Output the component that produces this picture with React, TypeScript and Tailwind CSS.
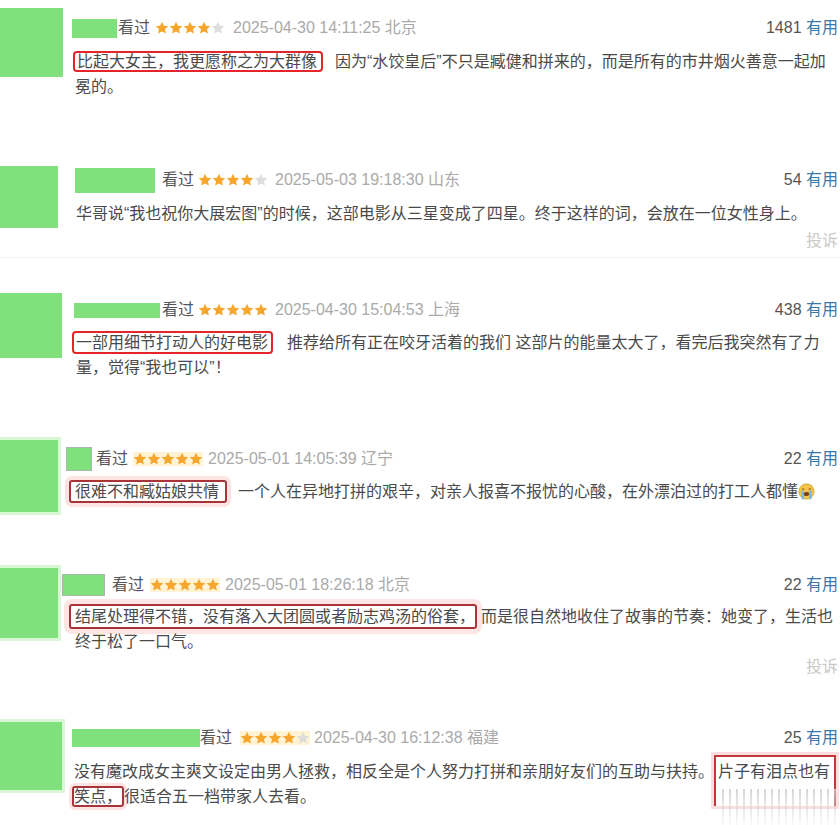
import React from "react";

function Stars({ n, bg }: { n: number; bg?: boolean }) {
  return (
    <span className={bg ? "flex bg-[#fff3d4]" : "flex"}>
      {[0, 1, 2, 3, 4].map((i) => (
        <svg key={i} width="14" height="14" viewBox="0 0 24 24">
          <path
            d="M12 1.2l3.2 7 7.6.8-5.7 5.1 1.6 7.5L12 17.8l-6.7 3.8 1.6-7.5L1.2 9l7.6-.8z"
            fill={i < n ? "#f6a62c" : "#dddddd"}
          />
        </svg>
      ))}
    </span>
  );
}

type HeaderProps = {
  nameCls: string;
  starsCls: string;
  dateCls: string;
  stars: number;
  date: string;
  count: string;
  starBg?: boolean;
};

function Header({ nameCls, starsCls, dateCls, stars, date, count, starBg }: HeaderProps) {
  return (
    <div className="flex h-[26px] items-center whitespace-nowrap">
      <span className={nameCls} />
      <span className="text-[#555]">看过</span>
      <span className={starsCls}>
        <Stars n={stars} bg={starBg} />
      </span>
      <span className={dateCls}>{date}</span>
      <span className="ml-auto text-[#555]">
        {count} <span className="text-[#3a78aa]">有用</span>
      </span>
    </div>
  );
}

function Report() {
  return <div className="text-right leading-[25px] text-[#c8c8c8]">投诉</div>;
}

function CryFace() {
  return (
    <svg width="17" height="17" viewBox="0 0 20 20" className="inline-block align-[-3px]">
      <circle cx="10" cy="10" r="9" fill="#f4c548" stroke="#c99a2a" strokeWidth="0.8" />
      <path d="M4.5 7.5q1.5-1.5 3 0M12.5 7.5q1.5-1.5 3 0" stroke="#6b4a1a" strokeWidth="1.1" fill="none" />
      <ellipse cx="10" cy="13" rx="3.2" ry="2.4" fill="#7a3b1a" />
      <path d="M4 9v10h3V9zM13 9v10h3V9z" fill="#6fb6ea" opacity="0.9" />
    </svg>
  );
}

export default function App() {
  return (
    <div className="w-[840px] h-[825px] overflow-hidden bg-white font-['Liberation_Sans','Noto_Sans_CJK_SC',sans-serif] text-[16px] text-[#4a4a4a]">
      {/* 1 */}
      <div className="flex h-[150px]">
        <div className="mt-[8px] h-[69px] w-[63px] shrink-0 bg-[#7fe07c]" />
        <div className="ml-[9px] min-w-0 flex-1 pr-[2px] pt-[15px]">
          <Header
            nameCls="mr-[1px] h-[19px] w-[45px] bg-[#7fe07c]"
            starsCls="ml-[5px]"
            dateCls="ml-[8px] text-[#aaa]"
            stars={4}
            date="2025-04-30 14:11:25 北京"
            count="1481"
          />
          <div className="mt-[8px] pl-[1px] leading-[25px] whitespace-nowrap">
            <div>
              <span className="rounded-[4px] border-2 border-[#e5252a] pl-[2px] pr-[4px]">比起大女主，我更愿称之为大群像</span>
              <span className="ml-[12px]">因为“水饺皇后”不只是臧健和拼来的，而是所有的市井烟火善意一起加</span>
            </div>
            <div className="pl-[2px]">冕的。</div>
          </div>
        </div>
      </div>

      {/* 2 */}
      <div className="flex h-[108px] border-b border-[#f2f2f2]">
        <div className="mt-[16px] h-[62px] w-[58px] shrink-0 bg-[#7fe07c]" />
        <div className="ml-[17px] min-w-0 flex-1 pr-[2px] pt-[17px]">
          <Header
            nameCls="mr-[7px] h-[25px] w-[80px] bg-[#7fe07c]"
            starsCls="ml-[4px]"
            dateCls="ml-[7px] text-[#aaa]"
            stars={4}
            date="2025-05-03 19:18:30 山东"
            count="54"
          />
          <div className="mt-[8px] pl-[1px] leading-[25px] whitespace-nowrap">
            华哥说“我也祝你大展宏图”的时候，这部电影从三星变成了四星。终于这样的词，会放在一位女性身上。
          </div>
          <div className="mt-[2px]">
            <Report />
          </div>
        </div>
      </div>

      {/* 3 */}
      <div className="flex h-[167px]">
        <div className="mt-[35px] h-[65px] w-[62px] shrink-0 bg-[#7fe07c]" />
        <div className="ml-[12px] min-w-0 flex-1 pr-[2px] pt-[39px]">
          <Header
            nameCls="mr-[2px] h-[15px] w-[86px] bg-[#7fe07c]"
            starsCls="ml-[4px]"
            dateCls="ml-[7px] text-[#aaa]"
            stars={5}
            date="2025-04-30 15:04:53 上海"
            count="438"
          />
          <div className="-ml-[2px] mt-[7px] leading-[25px] whitespace-nowrap">
            <div>
              <span className="rounded-[4px] border-2 border-[#e5252a] py-[1px] pl-[2px] pr-[3px]">一部用细节打动人的好电影</span>
              <span className="ml-[14px]">推荐给所有正在咬牙活着的我们 这部片的能量太大了，看完后我突然有了力</span>
            </div>
            <div className="pl-[4px]">量，觉得“我也可以”！</div>
          </div>
        </div>
      </div>

      {/* 4 */}
      <div className="flex h-[130px]">
        <div className="mt-[15px] h-[72px] w-[58px] shrink-0 bg-[#7fe07c] shadow-[0_0_0_3px_#d9f6d6]" />
        <div className="ml-[8px] min-w-0 flex-1 pr-[2px] pt-[21px]">
          <Header
            nameCls="mr-[4px] h-[24px] w-[26px] border border-[#a9b9a9] bg-[#7fe07c]"
            starsCls="ml-[5px]"
            dateCls="ml-[5px] text-[#aaa]"
            stars={5}
            date="2025-05-01 14:05:39 辽宁"
            count="22"
            starBg
          />
          <div className="ml-[3px] mt-[7px] leading-[25px] whitespace-nowrap">
            <span className="rounded-[3px] border-2 border-[#a8343a] py-[1px] pl-[4px] pr-[6px] shadow-[0_0_0_4px_#fde4e2]">很难不和臧姑娘共情</span>
            <span className="ml-[11px]">一个人在异地打拼的艰辛，对亲人报喜不报忧的心酸，在外漂泊过的打工人都懂</span>
            <CryFace />
          </div>
        </div>
      </div>

      {/* 5 */}
      <div className="flex h-[150px]">
        <div className="mt-[13px] h-[70px] w-[58px] shrink-0 bg-[#7fe07c] shadow-[0_0_0_3px_#d9f6d6]" />
        <div className="ml-[4px] min-w-0 flex-1 pr-[2px] pt-[17px]">
          <Header
            nameCls="mr-[7px] h-[22px] w-[43px] border border-[#a9b9a9] bg-[#7fe07c]"
            starsCls="ml-[6px]"
            dateCls="ml-[5px] text-[#aaa]"
            stars={5}
            date="2025-05-01 18:26:18 北京"
            count="22"
            starBg
          />
          <div className="ml-[7px] mt-[6px] leading-[25px] whitespace-nowrap">
            <div>
              <span className="rounded-[3px] border-2 border-[#a8343a] py-[2px] pl-[4px] pr-0 shadow-[0_0_0_5px_#fde6e4]">结尾处理得不错，没有落入大团圆或者励志鸡汤的俗套，</span>
              <span className="ml-[4px]">而是很自然地收住了故事的节奏：她变了，生活也</span>
            </div>
            <div className="pl-[6px]">终于松了一口气。</div>
          </div>
          <Report />
        </div>
      </div>

      {/* 6 */}
      <div className="relative flex h-[120px]">
        <div className="mt-[17px] h-[68px] w-[62px] shrink-0 bg-[#7fe07c] shadow-[0_0_0_3px_#d9f6d6]" />
        <div className="ml-[10px] min-w-0 flex-1 pr-[2px] pt-[20px]">
          <Header
            nameCls="h-[18px] w-[128px] bg-[#7fe07c]"
            starsCls="ml-[8px]"
            dateCls="ml-[4px] text-[#aaa]"
            stars={4}
            date="2025-04-30 16:12:38 福建"
            count="25"
            starBg
          />
          <div className="ml-[2px] mt-[8px] leading-[25px] whitespace-nowrap">
            <div>
              <span>没有魔改成女主爽文设定由男人拯救，相反全是个人努力打拼和亲朋好友们的互助与扶持。</span>
              <span className="border-2 border-b-0 border-[#c0393d] pb-[26px] pl-[2px] pr-[4px] pt-[6px] shadow-[0_0_0_3px_#fbdede]">片子有泪点也有</span>
            </div>
            <div>
              <span className="-ml-[2px] rounded-[3px] border-2 border-[#a8343a] shadow-[0_0_0_3px_#fde4e2]">笑点，</span>
              <span>很适合五一档带家人去看。</span>
            </div>
          </div>
        </div>
        <div className="absolute left-[722px] top-[84px] h-[41px] w-[114px] bg-[repeating-linear-gradient(90deg,#cdcdcd_0_2px,transparent_2px_7px)] opacity-80 [mask-image:linear-gradient(to_bottom,black,transparent)]" />
      </div>
    </div>
  );
}
